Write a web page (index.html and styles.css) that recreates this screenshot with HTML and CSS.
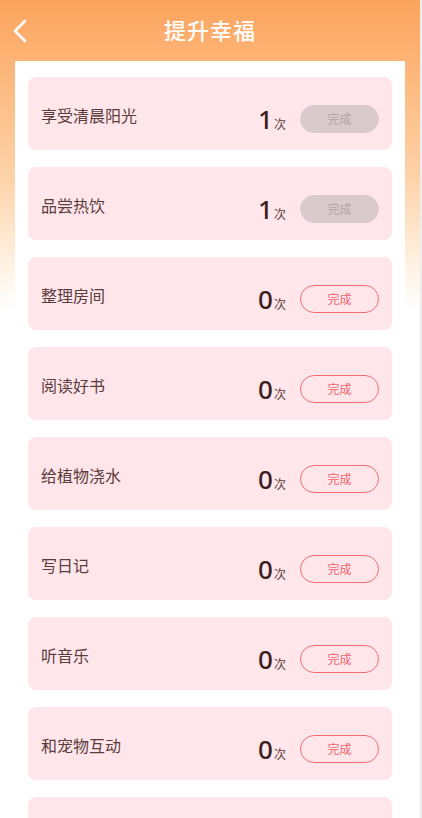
FILE: index.html
```html
<!DOCTYPE html>
<html lang="zh-CN">
<head>
    <meta charset="UTF-8">
    <meta name="viewport" content="width=device-width, initial-scale=1.0">
    <title>提升幸福</title>
    <link rel="stylesheet" href="styles.css">
</head>
<body>
    <div class="page">
        <div class="header">
            <span class="back">
                <svg width="16" height="24" viewBox="0 0 16 24">
                    <path d="M13 2 L3 12 L13 22" fill="none" stroke="#fff" stroke-width="2.6" stroke-linecap="round" stroke-linejoin="round"/>
                </svg>
            </span>
            <h1>提升幸福</h1>
        </div>
        <div class="panel">
            <div class="card">
                <span class="label">享受清晨阳光</span>
                <div class="right"><span class="count">1</span><span class="unit">次</span><span class="btn done">完成</span></div>
            </div>
            <div class="card">
                <span class="label">品尝热饮</span>
                <div class="right"><span class="count">1</span><span class="unit">次</span><span class="btn done">完成</span></div>
            </div>
            <div class="card">
                <span class="label">整理房间</span>
                <div class="right"><span class="count">0</span><span class="unit">次</span><span class="btn">完成</span></div>
            </div>
            <div class="card">
                <span class="label">阅读好书</span>
                <div class="right"><span class="count">0</span><span class="unit">次</span><span class="btn">完成</span></div>
            </div>
            <div class="card">
                <span class="label">给植物浇水</span>
                <div class="right"><span class="count">0</span><span class="unit">次</span><span class="btn">完成</span></div>
            </div>
            <div class="card">
                <span class="label">写日记</span>
                <div class="right"><span class="count">0</span><span class="unit">次</span><span class="btn">完成</span></div>
            </div>
            <div class="card">
                <span class="label">听音乐</span>
                <div class="right"><span class="count">0</span><span class="unit">次</span><span class="btn">完成</span></div>
            </div>
            <div class="card">
                <span class="label">和宠物互动</span>
                <div class="right"><span class="count">0</span><span class="unit">次</span><span class="btn">完成</span></div>
            </div>
            <!-- next card only peeks in at the bottom -->
            <div class="card"></div>
        </div>
    </div>
</body>
</html>
```

FILE: styles.css
```css
html, body {
    margin: 0;
    height: 100%;
    overflow: hidden;
}
body {
    font-family: "Noto Sans CJK SC", "Noto Sans", sans-serif;
    background: linear-gradient(180deg, #fca45d 0px, #fdb97e 80px, #fdd3aa 180px, #fff0e0 260px, #ffffff 310px);
}
.page {
    height: 818px;
    border-right: 2px solid #ededed;
    box-sizing: border-box;
    overflow: hidden;
}
.header {
    height: 61px;
    display: flex;
    align-items: center;
    justify-content: center;
    position: relative;
}
.back {
    position: absolute;
    left: 12px;
    top: 19px;
}
h1 {
    margin: 0 0 3px;
    color: #fff;
    font-size: 22px;
    font-weight: 500;
    letter-spacing: 1px;
}
.panel {
    margin: 0 15px;
    background: #fff;
    padding: 16px 13px 0;
    display: flex;
    flex-direction: column;
    gap: 17px;
    height: 757px;
    box-sizing: border-box;
    overflow: hidden;
}
.card {
    flex: none;
    height: 73px;
    background: #ffe6eb;
    border-radius: 8px;
    padding: 0 13px;
    display: flex;
    align-items: center;
    justify-content: space-between;
}
.label {
    font-size: 16px;
    color: #5b3b3b;
    margin-top: 3px;
}
.right {
    display: flex;
    align-items: baseline;
    margin-top: 10px;
}
.count {
    font-family: "Noto Sans", sans-serif;
    font-size: 26px;
    font-weight: 500;
    line-height: 28px;
    color: #3d1f1f;
}
.unit {
    font-size: 12px;
    color: #5b3b3b;
    margin-left: 1px;
}
.btn {
    align-self: center;
    margin-left: 14px;
    width: 79px;
    height: 28px;
    box-sizing: border-box;
    border: 1.5px solid #f46c70;
    border-radius: 14px;
    color: #f0636b;
    font-size: 12px;
    display: flex;
    align-items: center;
    justify-content: center;
}
.btn.done {
    background: #dac9cd;
    border-color: #dac9cd;
    color: #b4a3a7;
}
```
